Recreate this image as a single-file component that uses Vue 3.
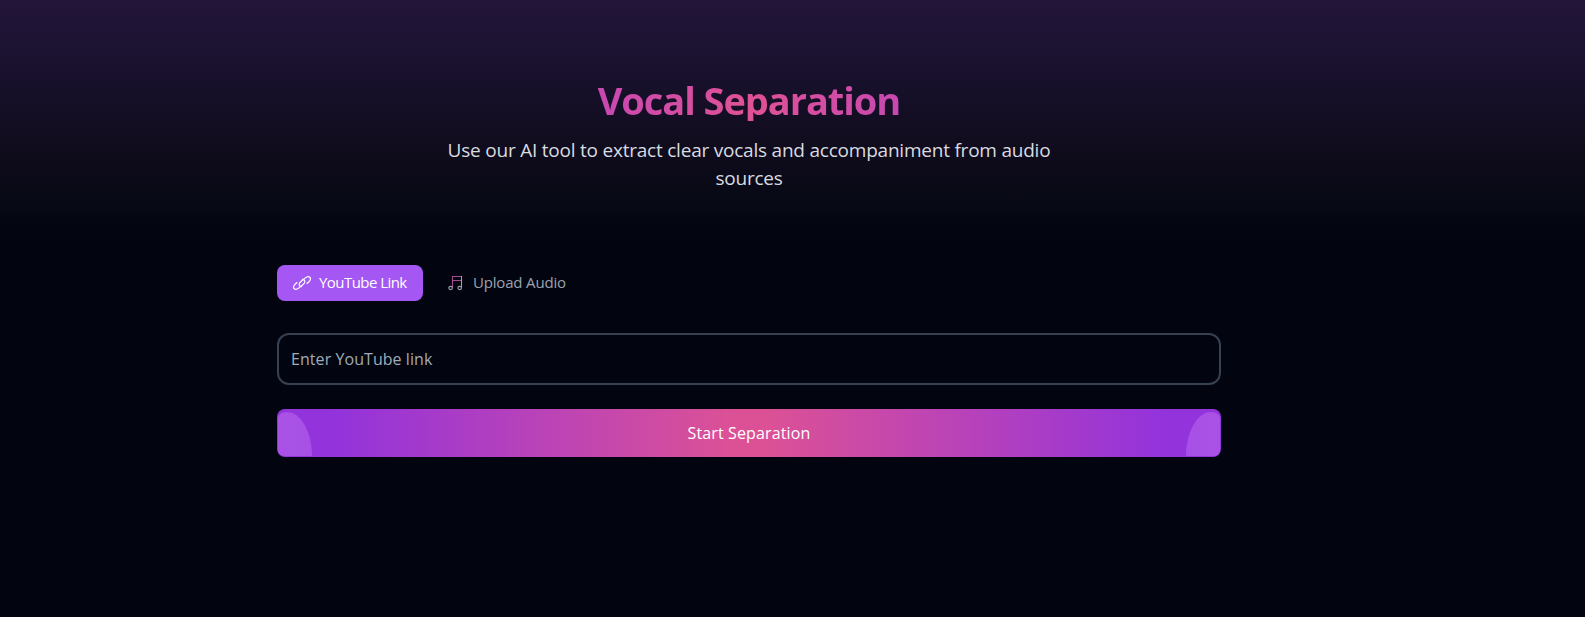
<script setup>
import { ref } from "vue";

const activeTab = ref("youtube");
const link = ref("");
</script>

<template>
  <main class="page">
    <header class="hero">
      <h1 class="title">Vocal Separation</h1>
      <p class="subtitle">
        Use our AI tool to extract clear vocals and accompaniment from audio
        sources
      </p>
    </header>
    <section class="content">
      <div class="tabs">
        <button
          class="tab"
          :class="{ active: activeTab === 'youtube' }"
          @click="activeTab = 'youtube'"
        >
          <svg class="icon link-icon" viewBox="0 0 18 14">
            <path d="M4.300 6.200 2 8.300C.4 9.900.1 11.400 1 12.500c1 1.100 2.900 1 4.600-.4l4.700-3.900c1.600-1.400 2-2.900 1-4-.6-.7-1.500-.9-2.400-.7" />
            <path d="m13.700 7.800 2.300-2.100c1.600-1.600 1.900-3.100 1-4.200-1-1.100-2.900-1-4.600.4L7.700 5.800c-1.600 1.400-2 2.900-1 4 .6.7 1.500.9 2.400.7" />
          </svg>
          <span class="link-label">YouTube Link</span>
        </button>
        <button
          class="tab"
          :class="{ active: activeTab === 'upload' }"
          @click="activeTab = 'upload'"
        >
          <svg class="icon" viewBox="0 0 18 18">
            <path class="stem" d="M5.500 13.500v-11h9M5.500 6.500h9" />
            <path d="M14.500 2v11.500" />
            <ellipse cx="3.600" cy="14" rx="1.800" ry="1.600" />
            <ellipse cx="12.700" cy="14" rx="1.800" ry="1.600" />
          </svg>
          <span class="upload-label">Upload Audio</span>
        </button>
      </div>
      <input v-model="link" class="link-input" placeholder="Enter YouTube link" />
      <button class="submit">Start Separation</button>
    </section>
  </main>
</template>

<style>
body {
  margin: 0;
  background: #020510;
}
</style>

<style scoped>
.page {
  box-sizing: border-box;
  height: 617px;
  padding: 80px 364px 0 277px;
  overflow: hidden;
  font-family: "Open Sans", "Noto Sans", sans-serif;
  background: linear-gradient(#231539 0, #19112e 70px, #120d20 130px, #0b0a18 180px, #060914 210px, #020510 240px);
}

.hero {
  height: 185px;
  text-align: center;
}

.title {
  margin: 0 0 16px;
  font-size: 38px;
  font-weight: 700;
  line-height: 41px;
  margin-bottom: 15px;
  letter-spacing: -1.05px;
  color: transparent;
  background: linear-gradient(90deg, #9333ea, #e05296, #9333ea);
  background-clip: text;
}

.subtitle {
  max-width: 640px;
  margin: 0 auto;
  font-size: 19px;
  line-height: 28px;
  letter-spacing: -0.22px;
  color: #d8dbe0;
}

.tabs {
  display: flex;
  gap: 8px;
  margin-bottom: 32px;
}

.tab {
  display: flex;
  align-items: center;
  box-sizing: border-box;
  width: 146px;
  height: 36px;
  padding: 0 0 0 16px;
  border: 0;
  border-radius: 8px;
  font-family: inherit;
  font-size: 15px;
  line-height: 24px;
  white-space: nowrap;
  color: #9ca3af;
  background: transparent;
}

.tab span {
  padding-bottom: 2px;
}

.link-label {
  letter-spacing: -0.55px;
}

.upload-label {
  letter-spacing: -0.18px;
}

.tab.active {
  color: #fff;
  background: #a457f3;
}

.icon {
  flex: none;
  width: 18px;
  height: 18px;
  margin-right: 8px;
  fill: none;
  stroke: currentColor;
  stroke-width: 1.1;
}

.link-icon {
  height: 14px;
  stroke-width: 1.2;
}

.stem {
  stroke: #a64a91;
}

.link-input {
  display: block;
  box-sizing: border-box;
  width: 100%;
  height: 52px;
  margin-bottom: 24px;
  padding: 0 12px;
  border: 2px solid #374151;
  border-radius: 12px;
  outline: none;
  font-family: inherit;
  font-size: 16px;
  letter-spacing: 0.06px;
  color: #fff;
  background: transparent;
}

.link-input::placeholder {
  color: #a0abb8;
  opacity: 1;
}

.submit {
  position: relative;
  display: block;
  width: 100%;
  height: 48px;
  padding: 0;
  border: 0;
  border-radius: 8px;
  overflow: hidden;
  font-family: inherit;
  font-size: 16px;
  font-weight: 500;
  letter-spacing: 0.14px;
  color: #fff;
  background: linear-gradient(90deg, #9333dc 6%, #dc5196 48%, #dc5196 52%, #9333dc 94%);
}

/* glow in the lower corners */
.submit::before,
.submit::after {
  content: "";
  position: absolute;
  top: 3px;
  bottom: 1px;
  left: 1px;
  width: 34px;
  border-radius: 9px 25px 0 6px / 6px 44px 0 6px;
  background: linear-gradient(90deg, #aa52e4, #a650e6);
}

.submit::after {
  left: auto;
  right: 1px;
  transform: scaleX(-1);
}
</style>
